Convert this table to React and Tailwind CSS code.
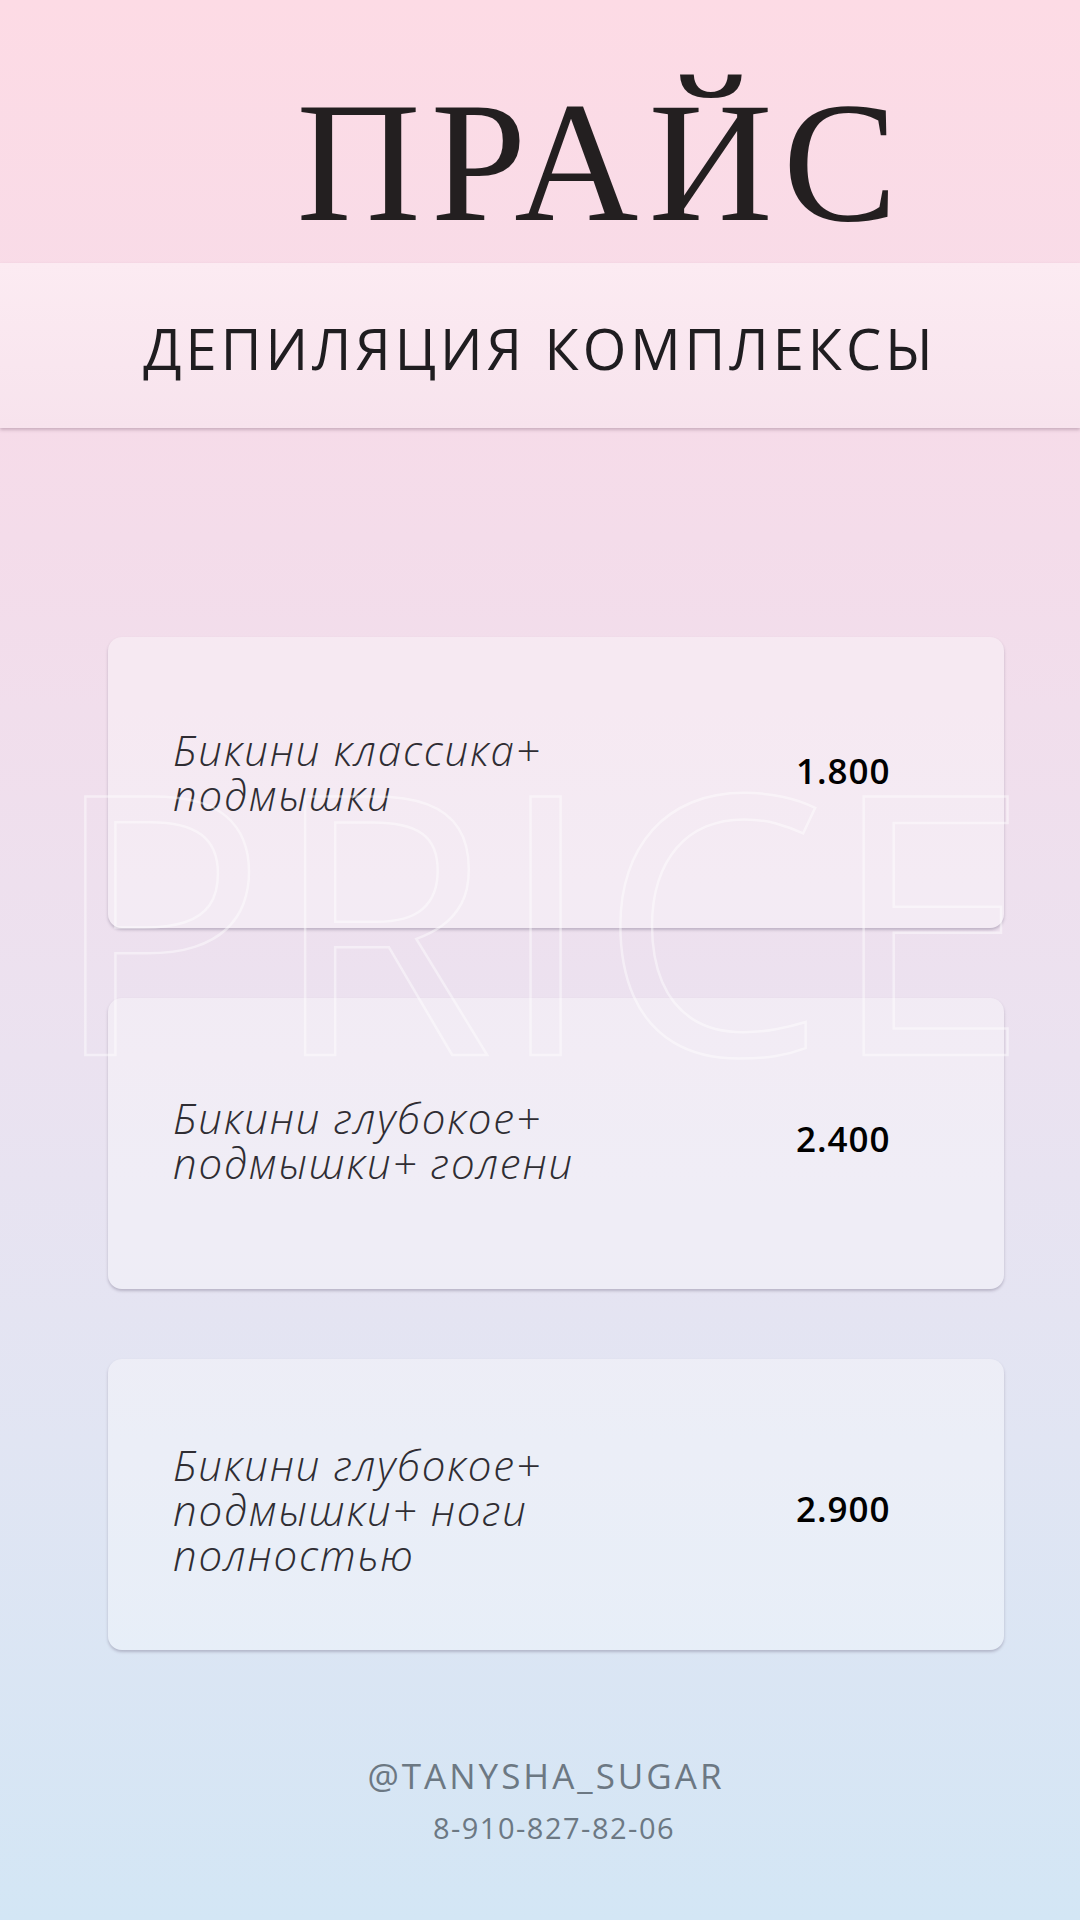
import React from 'react';

const items = [
    { lines: ['Бикини классика+', 'подмышки'], price: '1.800', shift: 'pb-[22px]' },
    { lines: ['Бикини глубокое+', 'подмышки+ голени'], price: '2.400', shift: 'pb-[8px]' },
    { lines: ['Бикини глубокое+', 'подмышки+ ноги', 'полностью'], price: '2.900', shift: 'pt-[10px]' },
];

const PriceCard = ({ item }) => (
    <div className={`h-[291px] rounded-[14px] bg-white/35 shadow-[0_2px_3px_rgba(90,80,110,0.32)] flex items-center ${item.shift}`}>
        <div className="w-[688px] pl-[65px] text-[42px] leading-[45px] tracking-[1.8px] italic font-light text-[#2f2d33] [font-family:'Open_Sans',sans-serif]">
            {item.lines.map((l, i) => (
                <div key={i}>{l}</div>
            ))}
        </div>
        <div className="text-[35px] tracking-[1px] font-semibold text-black [font-family:'Open_Sans',sans-serif]">
            {item.price}
        </div>
    </div>
);

export default function App() {
    return (
        <div className="relative w-[1080px] h-[1920px] overflow-hidden flex flex-col bg-[linear-gradient(180deg,#fddbe5_0%,#f4dcea_28%,#ebe2f0_55%,#e1e5f3_75%,#d3e6f5_100%)]">
            {/* Title */}
            <div className="h-[263px] flex justify-center pl-[124px] pt-[76px]">
                <h1 className="text-[172px] leading-none tracking-[10px] text-[#231f20] [font-family:'Liberation_Serif',serif] font-normal">
                    ПРАЙС
                </h1>
            </div>

            {/* Subtitle band */}
            <div className="h-[165px] bg-[linear-gradient(180deg,#fcebf2_0%,#f7e3ed_100%)] shadow-[0_2px_3px_rgba(150,120,140,0.45)] flex items-center justify-center pt-[4px]">
                <div className="text-[56px] leading-none font-normal tracking-[4px] text-[#1f1d20] [font-family:'Open_Sans',sans-serif]">
                    ДЕПИЛЯЦИЯ КОМПЛЕКСЫ
                </div>
            </div>

            {/* Cards */}
            <div className="mt-[209px] pl-[108px] pr-[76px] flex flex-col gap-[70px]">
                {items.map((it, i) => (
                    <PriceCard key={i} item={it} />
                ))}
            </div>

            {/* Footer */}
            <div className="mt-[108px] flex flex-col items-center text-[#6c7883] [font-family:'Open_Sans',sans-serif]">
                <div className="text-[35px] leading-none tracking-[3px] font-normal pl-[12px]">@TANYSHA_SUGAR</div>
                <div className="mt-[20px] text-[29px] leading-none tracking-[1.5px] font-normal pl-[28px]">8-910-827-82-06</div>
            </div>

            {/* PRICE watermark */}
            <div className="absolute left-[50px] top-[734px] pointer-events-none text-[362px] leading-none font-medium text-transparent [-webkit-text-stroke:2.5px_rgba(255,255,255,0.45)] [font-family:'Open_Sans',sans-serif] tracking-[2px]">
                PRICE
            </div>
        </div>
    );
}
